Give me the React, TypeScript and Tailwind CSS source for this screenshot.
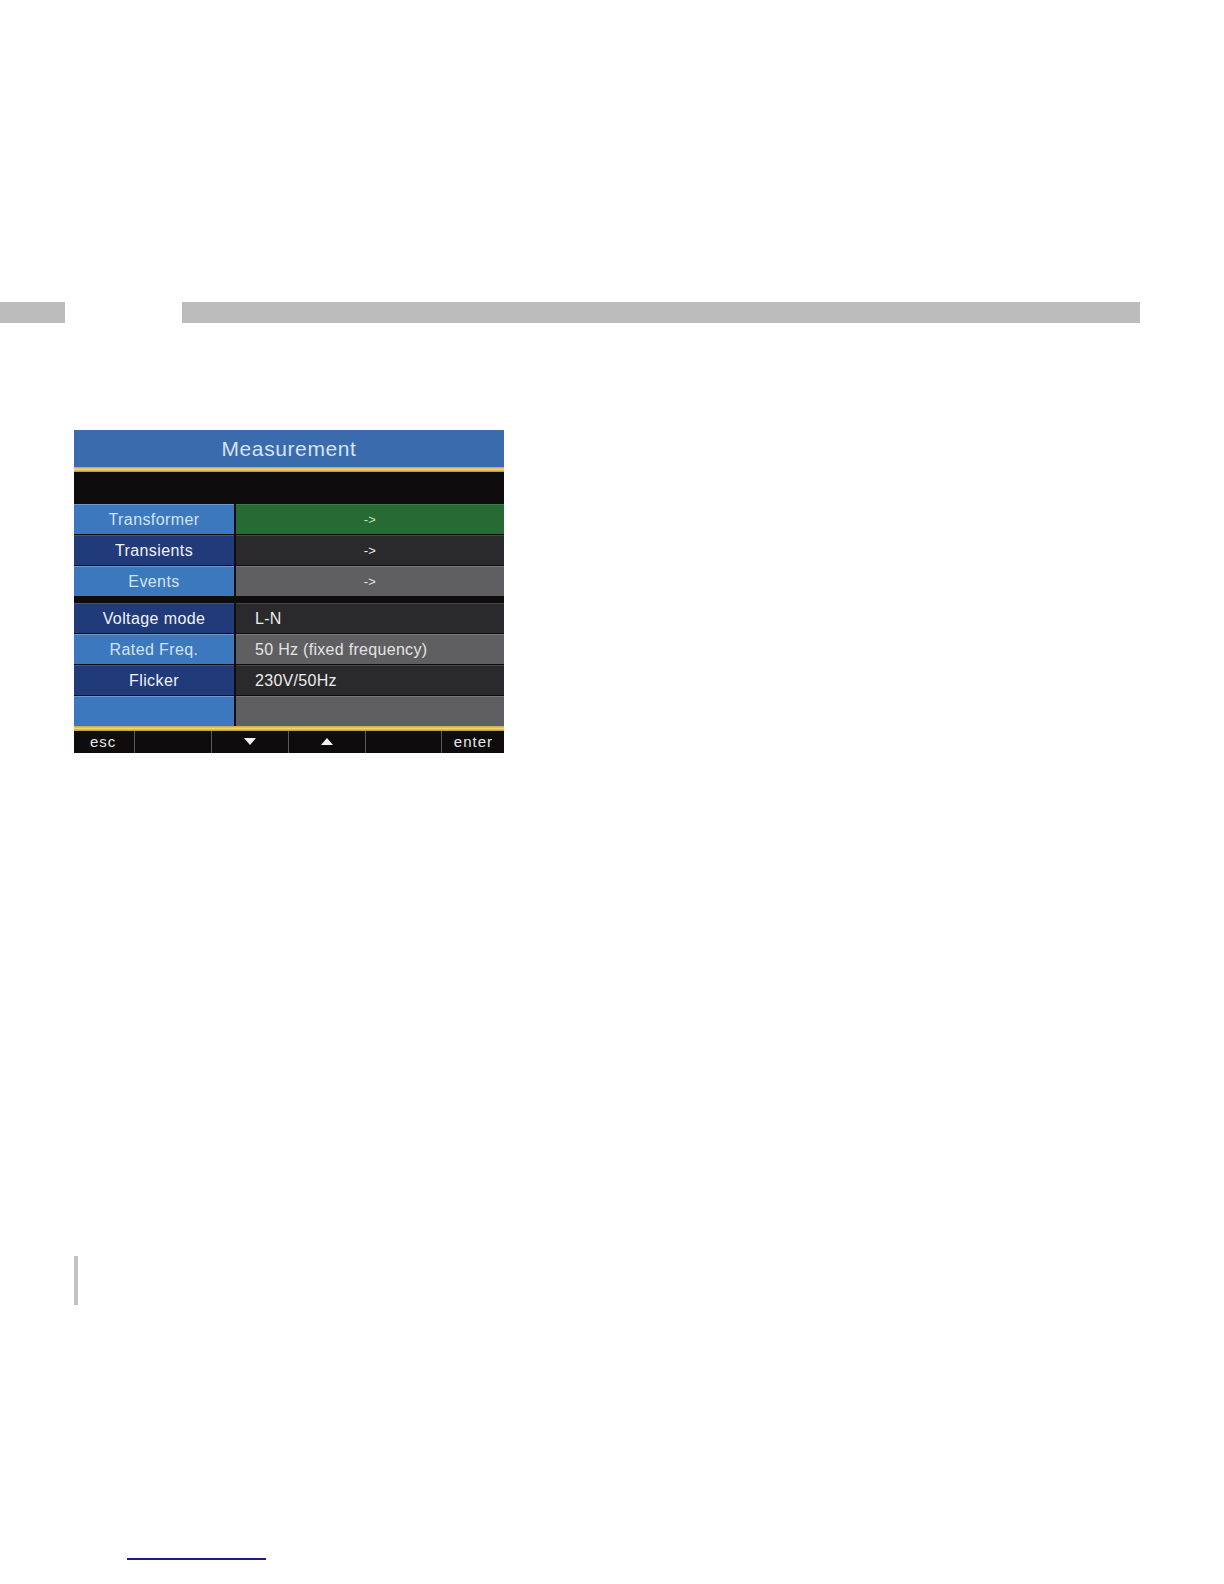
import React from "react";

const font = { fontFamily: '"Liberation Sans", Arial, sans-serif' };

type Row = {
  label: string;
  value: string;
  left: "light" | "dark";
  right: "green" | "dark" | "gray";
  center?: boolean;
};

const topRows: Row[] = [
  { label: "Transformer", value: "->", left: "light", right: "green", center: true },
  { label: "Transients", value: "->", left: "dark", right: "dark", center: true },
  { label: "Events", value: "->", left: "light", right: "gray", center: true },
];

const bottomRows: Row[] = [
  { label: "Voltage mode", value: "L-N", left: "dark", right: "dark" },
  { label: "Rated Freq.", value: "50 Hz (fixed frequency)", left: "light", right: "gray" },
  { label: "Flicker", value: "230V/50Hz", left: "dark", right: "dark" },
  { label: "", value: "", left: "light", right: "gray" },
];

const MenuRow = ({ row }: { row: Row }) => {
  const leftCls =
    row.left === "light"
      ? "bg-[#3b78bd] text-[#d3e3f5] border-t border-[#6d98cc]"
      : "bg-[#213a7a] text-[#f0f3f8] border-t border-[#3c548e]";
  const rightCls =
    row.right === "green"
      ? "bg-[#286a33] text-[#b9e6b5] border-t border-[#3f7d46]"
      : row.right === "dark"
      ? "bg-[#2a2a2c] text-[#ececec] border-t border-[#444446]"
      : "bg-[#5f5f61] text-[#e4e4e4] border-t border-[#79797b]";
  return (
    <div className="flex h-[30px] gap-[2px]">
      <div className={`w-[160px] flex items-center justify-center text-[16px] tracking-[0.4px] ${leftCls}`}>
        {row.label}
      </div>
      <div
        className={`flex-1 flex items-center tracking-[0.3px] ${rightCls} ${
          row.center ? "justify-center text-[13px]" : "pl-[19px] text-[16px]"
        }`}
      >
        {row.value}
      </div>
    </div>
  );
};

export default function App() {
  return (
    <div className="w-[1224px] h-[1584px] bg-white overflow-hidden" style={font}>
      {/* header rule */}
      <div className="pt-[302px] flex">
        <div className="w-[65px] h-[21px] bg-[#bcbcbc]" />
        <div className="ml-[117px] w-[958px] h-[21px] bg-[#bcbcbc]" />
      </div>

      {/* device screen */}
      <div className="ml-[74px] mt-[107px] w-[430px] bg-[#0e0c0c] flex flex-col">
        <div className="h-[37px] bg-[#3a6cad] flex items-center justify-center text-[21px] tracking-[0.6px] text-[#d4e3f6]">
          Measurement
        </div>
        <div className="h-[5px] bg-gradient-to-b from-[#c9a44a] via-[#f3d36f] to-[#b89342]" />
        <div className="h-[32px] bg-[#0e0c0c]" />
        <div className="flex flex-col gap-[1px]">
          {topRows.map((r) => (
            <MenuRow key={r.label} row={r} />
          ))}
        </div>
        <div className="h-[7px] bg-[#0e0c0c]" />
        <div className="flex flex-col gap-[1px]">
          {bottomRows.map((r, i) => (
            <MenuRow key={i} row={r} />
          ))}
        </div>
        <div className="h-[5px] bg-gradient-to-b from-[#c9a44a] via-[#f3d36f] to-[#b89342]" />
        <div className="h-[22px] flex text-[15px] text-[#e8e8e8] tracking-[1px]">
          <div className="w-[60px] flex items-center pl-[16px]">esc</div>
          <div className="w-[77px] border-l border-[#5a5a5a]" />
          <div className="w-[77px] border-l border-[#5a5a5a] flex items-center justify-center">
            <svg width="12" height="8" viewBox="0 0 12 8">
              <path d="M0 0 L12 0 L6 7 Z" fill="#f2f2f2" />
            </svg>
          </div>
          <div className="w-[77px] border-l border-[#5a5a5a] flex items-center justify-center">
            <svg width="12" height="8" viewBox="0 0 12 8">
              <path d="M0 7 L12 7 L6 0 Z" fill="#f2f2f2" />
            </svg>
          </div>
          <div className="w-[76px] border-l border-[#5a5a5a]" />
          <div className="flex-1 border-l border-[#5a5a5a] flex items-center justify-end pr-[11px]">
            enter
          </div>
        </div>
      </div>

      {/* side note marker */}
      <div className="ml-[74px] mt-[503px] w-[4px] h-[49px] bg-[#c2c2c2]" />

      {/* footnote rule */}
      <div className="ml-[127px] mt-[253px] w-[139px] h-[2px] bg-[#1c1c8c]" />
    </div>
  );
}
